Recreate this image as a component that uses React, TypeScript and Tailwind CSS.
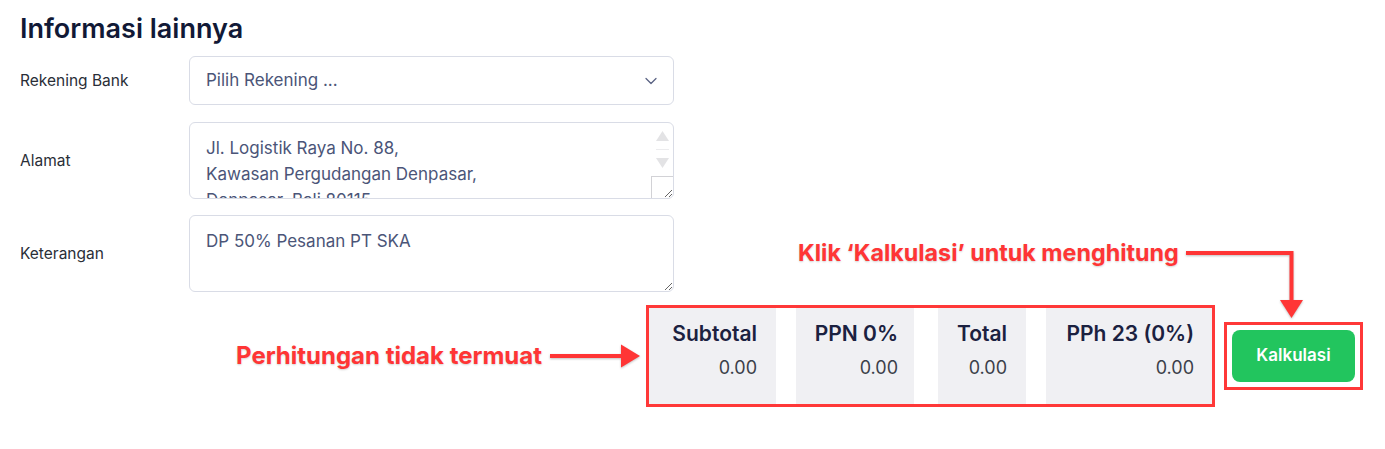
import { ChevronDown } from "lucide-react";

const cells = [
  { label: "Subtotal", value: "0.00", w: "w-[127px]", pr: "pr-[19px]", ml: "" },
  { label: "PPN 0%", value: "0.00", w: "w-[118px]", pr: "pr-[16px]", ml: "ml-5" },
  { label: "Total", value: "0.00", w: "w-[88px]", pr: "pr-[19px]", ml: "ml-6" },
  { label: "PPh 23 (0%)", value: "0.00", w: "w-[166px]", pr: "pr-[18px]", ml: "ml-5" },
];

function FakeScrollbar() {
  return (
    <div className="pointer-events-none absolute right-[1px] top-[1px] bottom-[1px] flex w-[22px] flex-col items-center">
      <svg width="13" height="10" viewBox="0 0 13 10" className="mt-[8px]">
        <polygon points="6.5,0 13,10 0,10" fill="#e3e3e5" />
      </svg>
      <div className="mt-[8px] h-px w-[13px] bg-[#ececee]" />
      <svg width="13" height="10" viewBox="0 0 13 10" className="mt-[8px]">
        <polygon points="0,0 13,0 6.5,10" fill="#e3e3e5" />
      </svg>
      <div className="mt-auto h-[22px] w-[22px] border-l border-t border-[#d2d2d6]" />
    </div>
  );
}

export default function App() {
  return (
    <div className="relative w-[1385px] h-[449px] overflow-hidden bg-white font-['Inter',sans-serif]">
      <div className="pl-5 pt-[13px]">
        <h2 className="text-[27px] leading-8 font-semibold text-[#111936]">Informasi lainnya</h2>

        <div className="mt-[11px] flex items-center">
          <div className="w-[169px] text-[15.5px] text-[#2a2e37]">Rekening Bank</div>
          <div className="flex h-[49px] w-[485px] items-center justify-between rounded-md border border-[#d9dce6] pl-4 pr-3 text-[17px] text-[#4b5578]">
            <span>Pilih Rekening ...</span>
            <ChevronDown size={20} strokeWidth={1.5} className="text-[#5a6383]" />
          </div>
        </div>

        <div className="mt-[17px] flex items-center">
          <div className="w-[169px] text-[15.5px] text-[#2a2e37]">Alamat</div>
          <div className="relative">
            <textarea
              readOnly
              defaultValue={"Jl. Logistik Raya No. 88,\nKawasan Pergudangan Denpasar,\nDenpasar, Bali 80115"}
              className="block h-[77px] w-[485px] rounded-md border border-[#d9dce6] px-4 py-3 text-[17px] leading-[26px] text-[#4b5578] outline-none"
            />
            <FakeScrollbar />
          </div>
        </div>

        <div className="mt-4 flex items-center">
          <div className="w-[169px] text-[15.5px] text-[#2a2e37]">Keterangan</div>
          <textarea
            readOnly
            defaultValue={"DP 50% Pesanan PT SKA"}
            className="block h-[77px] w-[485px] rounded-md border border-[#d9dce6] px-4 py-3 text-[17px] leading-[26px] text-[#4b5578] outline-none"
          />
        </div>
      </div>

      <div className="mt-[13px] flex items-center justify-end pr-[22px]">
        <div className="flex items-center">
          <span className="text-[24px] leading-[30px] font-bold text-[#ff3535] [text-shadow:0_1px_2px_rgba(0,0,0,0.18)]">
            Perhitungan tidak termuat
          </span>
          <svg width="92" height="26" viewBox="0 0 92 26" className="ml-2 drop-shadow-[0_1px_1px_rgba(0,0,0,0.25)]">
            <line x1="0" y1="13" x2="73" y2="13" stroke="#ff3535" strokeWidth="4" />
            <polygon points="71,1.5 90,13 71,24.5" fill="#ff3535" />
          </svg>
        </div>

        <div className="ml-[4px] flex border-[3px] border-[#ff3838] bg-white">
          {cells.map((c) => (
            <div key={c.label} className={`${c.w} ${c.pr} ${c.ml} h-[96px] bg-[#f0f0f3] pt-[12px] text-right`}>
              <div className="text-[21px] leading-7 font-semibold text-[#1b2140]">{c.label}</div>
              <div className="mt-[7px] text-[18px] leading-[26px] text-[#3b3f4a]">{c.value}</div>
            </div>
          ))}
        </div>

        <div className="ml-[9px] border-[3px] border-[#ff3838] p-[5px]">
          <button className="flex h-[52px] w-[123px] items-center justify-center rounded-lg bg-[#22c55e] text-[17px] font-semibold text-white">
            Kalkulasi
          </button>
        </div>
      </div>

      <div className="absolute left-[798px] top-[238px] text-[23.3px] leading-[30px] font-bold text-[#ff3535] [text-shadow:0_1px_2px_rgba(0,0,0,0.18)]">
        Klik ‘Kalkulasi’ untuk menghitung
      </div>
      <svg
        width="122"
        height="72"
        viewBox="0 0 122 72"
        className="absolute left-[1184px] top-[249px] drop-shadow-[0_1px_1px_rgba(0,0,0,0.25)]"
      >
        <polyline points="2,4 107.5,4 107.5,52" fill="none" stroke="#ff3535" strokeWidth="4" />
        <polygon points="96,51 119,51 107.5,69" fill="#ff3535" />
      </svg>
    </div>
  );
}
